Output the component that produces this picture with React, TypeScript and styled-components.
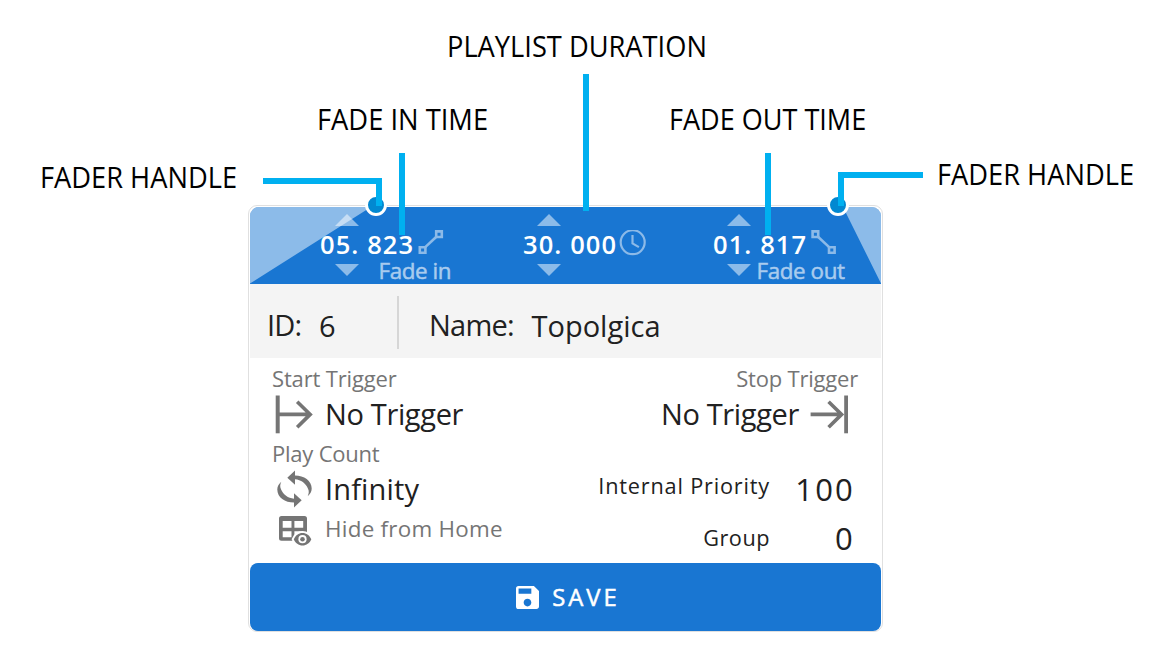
import * as React from 'react';
import styled, { createGlobalStyle, css } from 'styled-components';
import { MdSave } from 'react-icons/md';

const palette = {
  primary: '#1976d2',
  primarySoft: '#8cbae8',
  label: '#a9cbee',
  handle: '#0288d1',
  callout: '#00b0f0',
  muted: '#757575',
  text: '#212121',
};

const GlobalStyle = createGlobalStyle`
  * {
    box-sizing: border-box;
  }

  body {
    margin: 0;
    background: #fff;
    font-family: 'Open Sans', 'Noto Sans', sans-serif;
  }
`;

const FadeInIcon = () => (
  <svg width={26} height={26} viewBox="0 0 26 26" fill="none">
    <g stroke={palette.primarySoft} strokeWidth={2.6}>
      <path d="M1.8 17.2h5.6v5.6H1.8zM18.2 1.4h5.6V7h-5.6z" />
      <path d="M7 17.4L18.4 6.8" />
    </g>
  </svg>
);

const FadeOutIcon = () => (
  <svg width={26} height={26} viewBox="0 0 26 26" fill="none">
    <g stroke={palette.primarySoft} strokeWidth={2.6}>
      <path d="M1.6 1.4h5.6V7H1.6zM18 17.2h5.6v5.6H18z" />
      <path d="M7 6.8l11.4 10.6" />
    </g>
  </svg>
);

const ClockIcon = () => (
  <svg width={28} height={26} viewBox="0 0 28 26" fill="none">
    <g stroke={palette.primarySoft} strokeWidth={2.2}>
      <circle cx={13.7} cy={12.2} r={12} />
      <path d="M13.5 5v8.4l6.4 3.7" />
    </g>
  </svg>
);

const StartIcon = () => (
  <svg width={42} height={42} viewBox="0 0 42 42" fill="none">
    <path d="M3.7 2.5h4v37.8h-4z" fill={palette.muted} />
    <path
      d="M7 21.4h31.5M25.2 8.8l13 12.6-13 12.8"
      stroke={palette.muted}
      strokeWidth={3.6}
    />
  </svg>
);

const StopIcon = () => (
  <svg width={42} height={42} viewBox="0 0 42 42" fill="none">
    <path d="M36.2 2.5H40v37.8h-3.8z" fill={palette.muted} />
    <path
      d="M2.6 21.4h31.5M20.6 8.8l13 12.6-13 12.8"
      stroke={palette.muted}
      strokeWidth={3.6}
    />
  </svg>
);

const LOOP_ARROW =
  'M15.3 9.8L23 2.5v4.900C32 7.500 39.700 12.500 39.700 20.500c0 3-1.500 5.500-4 7.700 1.300-3 1.500-5.200.2-7.700C33.800 15.300 29 11.800 23 11.300v5.500z';

const LoopIcon = () => (
  <svg width={42} height={42} viewBox="0 0 42 42" fill={palette.muted}>
    <path d={LOOP_ARROW} />
    <path d={LOOP_ARROW} transform="rotate(180 22.5 21)" />
  </svg>
);

const HideIcon = () => (
  <svg width={42} height={38} viewBox="0 0 42 38">
    <path
      fill={palette.muted}
      fillRule="evenodd"
      d="M9.500 7h23a2.500 2.500 0 012.500 2.500v22.200H9.500A2.500 2.500 0 017 29.200V9.500A2.500 2.500 0 019.500 7zM10.700 12v6.700h8.800V12zM22.400 12v6.700h8.800V12zM10.700 22.300v6h8.800v-6zM22.400 22.300v6h8.800v-6z"
    />
    <path
      fill={palette.muted}
      stroke="#fff"
      strokeWidth={4}
      paintOrder="stroke"
      d="M21.800 30.200c1.600-3.900 4.800-6.300 8.700-6.300s7.100 2.400 8.800 6.300c-1.700 3.900-4.900 6.300-8.800 6.300s-7.100-2.400-8.700-6.300z"
    />
    <circle cx={30.5} cy={30.2} r={4.1} fill="#fff" />
    <circle cx={30.5} cy={30.2} r={2.3} fill={palette.muted} />
  </svg>
);

const UpArrow = () => (
  <svg width={24} height={12} viewBox="0 0 24 12">
    <path d="M0 12L12 0l12 12z" fill="#fff" fillOpacity={0.5} />
  </svg>
);

const DownArrow = () => (
  <svg width={24} height={12} viewBox="0 0 24 12">
    <path d="M0 0h24L12 12z" fill="#fff" fillOpacity={0.5} />
  </svg>
);

interface TimeProps {
  value: string;
  inset: number;
  icon: React.ReactNode;
  iconGap: number;
  label?: string;
  labelGap?: number;
}

const Time = ({
  value,
  inset,
  icon,
  iconGap,
  label,
  labelGap = 0,
}: TimeProps) => (
  <TimeStyled>
    <Stepper $inset={inset}>
      <UpArrow />
    </Stepper>
    <TimeRow $gap={iconGap}>
      <TimeValue>{value}</TimeValue>
      {icon}
    </TimeRow>
    <Stepper $inset={inset}>
      <DownArrow />
      {label && <TimeLabel $gap={labelGap}>{label}</TimeLabel>}
    </Stepper>
  </TimeStyled>
);

const App = () => (
  <Page>
    <GlobalStyle />
    <Card>
      <Fader>
        <FadeShape width={631} height={77} viewBox="0 0 631 77">
          <path
            d="M9 0h112L0 76.500V9a9 9 0 019-9zM593 0h29a9 9 0 019 9v67.500z"
            fill="#fff"
            opacity={0.5}
          />
        </FadeShape>
        <Time
          value="05. 823"
          inset={15}
          icon={<FadeInIcon />}
          iconGap={4}
          label="Fade in"
          labelGap={19.5}
        />
        <Time value="30. 000" inset={13.5} icon={<ClockIcon />} iconGap={2} />
        <Time
          value="01. 817"
          inset={14}
          icon={<FadeOutIcon />}
          iconGap={3.5}
          label="Fade out"
          labelGap={5.5}
        />
        <Handle $left={114.5} />
        <Handle $left={576.7} />
      </Fader>

      <Info>
        <InfoCell $width={147} $inset={17}>
          <InfoLabel $width={52} $spacing={-0.8}>
            ID:
          </InfoLabel>
          <InfoValue>6</InfoValue>
        </InfoCell>
        <Divider />
        <InfoCell $width={480} $inset={30}>
          <InfoLabel $width={102.5} $spacing={-0.75}>
            Name:
          </InfoLabel>
          <InfoValue>Topolgica</InfoValue>
        </InfoCell>
      </Info>

      <Settings>
        <Column>
          <Caption $spacing={-0.15}>Start Trigger</Caption>
          <Row>
            <StartIcon />
            <Value $spacing={-0.35}>No Trigger</Value>
          </Row>
          <CaptionSpaced $spacing={-0.22}>Play Count</CaptionSpaced>
          <Row>
            <LoopIcon />
            <Value $spacing={0.15}>Infinity</Value>
          </Row>
          <HideRow>
            <HideIcon />
            <HideText>Hide from Home</HideText>
          </HideRow>
        </Column>
        <Column $end>
          <Caption $spacing={-0.2}>Stop Trigger</Caption>
          <StopRow>
            <Value $spacing={-0.35}>No Trigger</Value>
            <StopIcon />
          </StopRow>
          <NumberRows>
            <NumberLabel $spacing={0.81} $raised>
              Internal Priority
            </NumberLabel>
            <NumberValue>100</NumberValue>
            <NumberLabel $spacing={0.51}>Group</NumberLabel>
            <NumberValue>0</NumberValue>
          </NumberRows>
        </Column>
      </Settings>

      <SaveButton>
        <MdSave viewBox="3 3 18 18" size={23} />
        SAVE
      </SaveButton>
    </Card>

    <Callout $left={447} $top={31} $stretch={0.927}>
      PLAYLIST DURATION
    </Callout>
    <Callout $left={317} $top={104} $stretch={0.929}>
      FADE IN TIME
    </Callout>
    <Callout $left={669} $top={104} $stretch={0.92}>
      FADE OUT TIME
    </Callout>
    <Callout $left={40} $top={162} $stretch={0.927}>
      FADER HANDLE
    </Callout>
    <Callout $left={937} $top={159} $stretch={0.927}>
      FADER HANDLE
    </Callout>
    <Pointer $left={583} $top={74} $height={137} />
    <Pointer $left={399} $top={153} $height={82} />
    <Pointer $left={765} $top={153} $height={82} />
    <Elbow $left={263} $top={178} $width={119} $height={28} $side="right" />
    <Elbow $left={838} $top={172} $width={85} $height={34} $side="left" />
  </Page>
);

const Page = styled.main`
  position: relative;
  width: 1167px;
  height: 665px;
  padding: 205px 0 0 248px;
  overflow: hidden;
`;

const Card = styled.section`
  width: 635px;
  padding: 1px 1px 0;
  border: 1px solid #e0e0e0;
  border-radius: 9px;
  color: ${palette.text};
`;

const Fader = styled.header`
  position: relative;
  display: grid;
  grid-template-columns: 203px 190px 1fr;
  height: 77px;
  padding: 7px 0 0 70px;
  border-radius: 9px 9px 0 0;
  background: ${palette.primary};
`;

const FadeShape = styled.svg`
  position: absolute;
  left: 0;
  top: 0;
`;

const Handle = styled.span<{ $left: number }>`
  position: absolute;
  left: ${({ $left }) => $left}px;
  top: -13px;
  width: 22px;
  height: 22px;
  border: 3.5px solid #fff;
  border-radius: 50%;
  background: ${palette.handle};
`;

const TimeStyled = styled.div`
  position: relative;
  display: flex;
  flex-direction: column;
  white-space: pre;
`;

const Stepper = styled.div<{ $inset: number }>`
  display: flex;
  height: 12px;
  padding-left: ${({ $inset }) => $inset}px;
`;

const TimeRow = styled.div<{ $gap: number }>`
  display: flex;
  align-items: flex-start;
  gap: ${({ $gap }) => $gap}px;
  height: 38px;

  svg {
    margin-top: 4px;
  }
`;

const TimeValue = styled.span`
  color: #fff;
  font-size: 25.5px;
  font-weight: 600;
  line-height: 36px;
  letter-spacing: 1.1px;
`;

const TimeLabel = styled.span<{ $gap: number }>`
  margin-left: ${({ $gap }) => $gap}px;
  color: ${palette.label};
  font-size: 22.4px;
  line-height: 13px;
  letter-spacing: -0.4px;
  -webkit-text-stroke: 0.5px ${palette.label};
`;

const Info = styled.div`
  display: flex;
  align-items: center;
  height: 74px;
  background: #f4f4f4;
`;

const InfoCell = styled.div<{ $width: number; $inset: number }>`
  display: flex;
  width: ${({ $width }) => $width}px;
  padding: 8px 0 0 ${({ $inset }) => $inset}px;
  font-size: 29px;
  line-height: 66px;
`;

const InfoLabel = styled.span<{ $width: number; $spacing: number }>`
  width: ${({ $width }) => $width}px;
  letter-spacing: ${({ $spacing }) => $spacing}px;
`;

const InfoValue = styled.span`
  padding-top: 1px;
`;

const Divider = styled.span`
  width: 2px;
  height: 53px;
  margin-top: 3px;
  background: #d6d6d6;
`;

const Settings = styled.div`
  display: flex;
  justify-content: space-between;
  height: 205px;
  padding: 8px 23px 0 22px;
`;

const Column = styled.div<{ $end?: boolean }>`
  display: flex;
  flex-direction: column;
  align-items: ${({ $end }) => ($end ? 'flex-end' : 'flex-start')};
`;

const Caption = styled.span<{ $spacing: number }>`
  color: ${palette.muted};
  font-size: 22px;
  line-height: 24px;
  letter-spacing: ${({ $spacing }) => $spacing}px;
`;

const CaptionSpaced = styled(Caption)`
  margin-top: 4px;
`;

const rowLayout = css`
  display: flex;
  align-items: center;
  height: 47px;
`;

const Row = styled.div`
  ${rowLayout}
  gap: 11px;
`;

const StopRow = styled.div`
  ${rowLayout}
  gap: 9px;
  margin-right: 8px;
`;

const HideRow = styled.div`
  ${rowLayout}
  gap: 11px;
  height: 32px;
`;

const Value = styled.span<{ $spacing: number }>`
  font-size: 29px;
  line-height: 48px;
  letter-spacing: ${({ $spacing }) => $spacing}px;
`;

const HideText = styled.span`
  padding-top: 2px;
  color: ${palette.muted};
  font-size: 22.4px;
  line-height: 32px;
  letter-spacing: 0.26px;
`;

const NumberRows = styled.div`
  display: grid;
  grid-template-columns: auto 85px;
  grid-template-rows: 47px 50px;
  align-items: center;
  justify-items: end;
  margin: 28px 3px 0 0;
`;

const NumberLabel = styled.span<{ $spacing: number; $raised?: boolean }>`
  padding-bottom: ${({ $raised }) => ($raised ? 6 : 0)}px;
  font-size: 21.7px;
  letter-spacing: ${({ $spacing }) => $spacing}px;
`;

const NumberValue = styled.span`
  padding-top: 1px;
  font-size: 31px;
  letter-spacing: 2.2px;
`;

const SaveButton = styled.button`
  display: flex;
  align-items: center;
  justify-content: center;
  gap: 13px;
  width: 100%;
  height: 68px;
  padding: 0 0 0 5px;
  border: 0;
  border-radius: 8px;
  background: ${palette.primary};
  color: #fff;
  font-family: inherit;
  font-size: 23.8px;
  letter-spacing: 3px;
  -webkit-text-stroke: 0.5px #fff;

  svg {
    -webkit-text-stroke: 0;
    stroke: none;
  }
`;

const Callout = styled.span<{ $left: number; $top: number; $stretch: number }>`
  position: absolute;
  left: ${({ $left }) => $left}px;
  top: ${({ $top }) => $top}px;
  color: #000;
  font-size: 29.4px;
  line-height: 30px;
  white-space: nowrap;
  transform: scaleX(${({ $stretch }) => $stretch});
  transform-origin: left;
`;

const Pointer = styled.span<{ $left: number; $top: number; $height: number }>`
  position: absolute;
  left: ${({ $left }) => $left}px;
  top: ${({ $top }) => $top}px;
  width: 6px;
  height: ${({ $height }) => $height}px;
  background: ${palette.callout};
`;

const Elbow = styled(Pointer)<{ $width: number; $side: 'left' | 'right' }>`
  width: ${({ $width }) => $width}px;
  border-top: 6px solid ${palette.callout};
  border-${({ $side }) => $side}: 6px solid ${palette.callout};
  background: none;
`;

export default App;
